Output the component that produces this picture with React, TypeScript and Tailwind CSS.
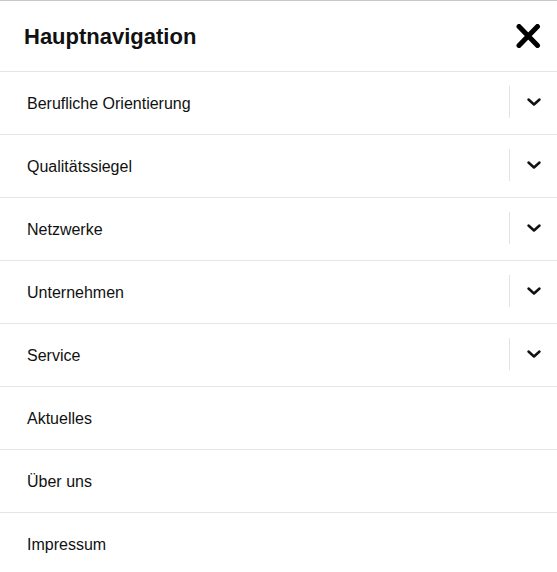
import React from "react";

const items: { label: string; sub: boolean }[] = [
  { label: "Berufliche Orientierung", sub: true },
  { label: "Qualitätssiegel", sub: true },
  { label: "Netzwerke", sub: true },
  { label: "Unternehmen", sub: true },
  { label: "Service", sub: true },
  { label: "Aktuelles", sub: false },
  { label: "Über uns", sub: false },
  { label: "Impressum", sub: false },
];

function Chevron() {
  return (
    <svg width="16" height="10" viewBox="0 0 16 10" fill="none">
      <path d="M2.5 2.5 L8 7.5 L13.5 2.5" stroke="#111" strokeWidth="2.5" strokeLinecap="round" strokeLinejoin="round" />
    </svg>
  );
}

function Close() {
  return (
    <svg width="26" height="24" viewBox="0 0 26 24" fill="none">
      <path d="M4 2.5 L22.5 21.5 M22.5 2.5 L4 21.5" stroke="#000" strokeWidth="5" strokeLinecap="round" />
    </svg>
  );
}

export default function App() {
  return (
    <div className="w-[557px] h-[572px] bg-white overflow-hidden border-t border-[#c9c9c9]" style={{ fontFamily: '"Liberation Sans", Arial, sans-serif' }}>
      <div className="h-[71px] flex items-center justify-between pl-6 pr-[16px] border-b border-[#e6e6e6]">
        <h2 className="text-[22px] font-bold text-[#111]">Hauptnavigation</h2>
        <Close />
      </div>
      {items.map((it) => (
        <div key={it.label} className="h-[63px] flex items-center border-b border-[#e6e6e6]">
          <span className="pl-[27px] pt-[2px] flex-1 text-[16px] text-[#111]">{it.label}</span>
          {it.sub && (
            <div className="flex items-center h-full">
              <div className="w-px h-8 bg-[#e3e3e3] -mt-[2px]" />
              <div className="w-[47px] flex items-center justify-center -mt-[3px]">
                <Chevron />
              </div>
            </div>
          )}
        </div>
      ))}
    </div>
  );
}
